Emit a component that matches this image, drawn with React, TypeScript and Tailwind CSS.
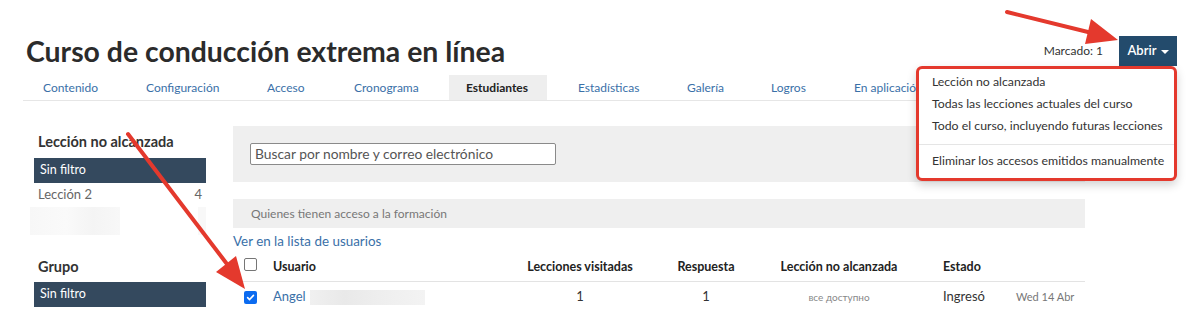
import React from "react";

const tabs: [string, string][] = [
  ["Contenido", "w-[89px]"],
  ["Configuración", "w-[107px]"],
  ["Acceso", "w-[73px]"],
  ["Cronograma", "w-[98px]"],
  ["Estudiantes", "w-[98px]"],
  ["Estadísticas", "w-[95px]"],
  ["Galería", "w-[70px]"],
  ["Logros", "w-[69px]"],
  ["En aplicación", "w-[100px]"],
];

function Arrows() {
  return (
    <svg
      className="pointer-events-none absolute left-0 top-0"
      width="1200"
      height="315"
      viewBox="0 0 1200 315"
    >
      <line x1="1007" y1="12" x2="1092" y2="33" stroke="#e4392d" strokeWidth="4" strokeLinecap="round" />
      <polygon points="1118,40 1085,44 1091,19" fill="#e4392d" />
      <line x1="128" y1="134" x2="230" y2="268" stroke="#e4392d" strokeWidth="4" strokeLinecap="round" />
      <polygon points="245,289 216,272 236,256" fill="#e4392d" />
    </svg>
  );
}

export default function App() {
  return (
    <div
      className="relative h-[315px] w-[1200px] overflow-hidden bg-white text-[#333]"
      style={{ fontFamily: "Lato, 'Liberation Sans', sans-serif" }}
    >
      {/* Header */}
      <div className="flex items-center justify-between pl-[26px] pr-[23px] pt-[36px]">
        <h1 className="whitespace-nowrap text-[28.4px] font-bold leading-[30px] text-[#2b2b2b]">
          Curso de conducción extrema en línea
        </h1>
        <div className="flex items-center gap-[16px]">
          <span className="whitespace-nowrap text-[12px] text-[#333]">Marcado: 1</span>
          <div className="relative">
            <button className="flex h-[30px] w-[58px] items-center justify-center gap-[4px] bg-[#234b6c] text-[13px] font-semibold text-white">
              Abrir
              <span className="mt-[1px] h-0 w-0 border-x-[4px] border-t-[4px] border-x-transparent border-t-white" />
            </button>
            <div className="absolute right-0 top-full z-10 w-[261px] whitespace-nowrap rounded-[6px] border-[3px] border-[#e4392d] bg-white pb-[6px] pt-[2px] text-[12.3px] text-[#333] shadow-[0_4px_10px_rgba(0,0,0,0.18)]">
              <div className="flex h-[22px] items-center px-[13px]">Lección no alcanzada</div>
              <div className="flex h-[22px] items-center px-[13px]">Todas las lecciones actuales del curso</div>
              <div className="flex h-[22px] items-center px-[13px]">Todo el curso, incluyendo futuras lecciones</div>
              <div className="mb-[5px] mt-[7px] h-px bg-[#e5e5e5]" />
              <div className="flex h-[22px] items-center px-[13px]">Eliminar los accesos emitidos manualmente</div>
            </div>
          </div>
        </div>
      </div>

      {/* Tabs */}
      <div className="mx-[23px] mt-[9px] flex gap-[14px] border-b border-[#e6e6e6] pl-[3px]">
        {tabs.map(([t, w]) => (
          <div
            key={t}
            className={
              t === "Estudiantes"
                ? `flex h-[25px] ${w} items-center whitespace-nowrap bg-[#eeeeee] pl-[17px] text-[12px] font-bold text-[#222]`
                : `flex h-[25px] ${w} items-center whitespace-nowrap pl-[17px] text-[12px] text-[#3a70a8]`
            }
          >
            {t}
          </div>
        ))}
      </div>

      {/* Body */}
      <div className="mt-[25px] flex gap-[27px] pl-[34px]">
        {/* Sidebar */}
        <div className="w-[172px] pt-[6px]">
          <div className="mb-[6px] pl-[4px] text-[14.5px] font-bold leading-[20px] text-[#333]">
            Lección no alcanzada
          </div>
          <div className="flex h-[25px] items-center bg-[#34495e] pl-[6px] text-[12.5px] text-white">
            Sin filtro
          </div>
          <div className="flex h-[24px] items-center justify-between pl-[4px] pr-[4px] text-[13px] text-[#666]">
            <span>Lección 2</span>
            <span>4</span>
          </div>
          <div className="flex h-[28px] items-stretch justify-between">
            <div className="ml-[-4px] w-[90px] bg-[linear-gradient(90deg,#f7f7f7,#fafafa_40%,#f4f4f4_70%,#f8f8f8)]" />
            <div className="w-[8px] bg-[#f8f8f8]" />
          </div>
          <div className="mb-[5px] mt-[22px] pl-[4px] text-[14.5px] font-bold leading-[20px] text-[#333]">
            Grupo
          </div>
          <div className="flex h-[25px] items-center bg-[#34495e] pl-[6px] text-[12.5px] text-white">
            Sin filtro
          </div>
        </div>

        {/* Main */}
        <div className="w-[852px]">
          <div className="flex h-[56px] items-center bg-[#efefef] px-[17px]">
            <div className="flex h-[22px] w-[306px] items-center whitespace-nowrap rounded-[2px] border border-[#8a8a8a] bg-white px-[4px] text-[13.8px] text-[#555]">
              Buscar por nombre y correo electrónico
            </div>
          </div>
          <div className="mt-[17px] flex h-[29px] items-center bg-[#efefef] pl-[18px] text-[12px] text-[#777]">
            Quienes tienen acceso a la formación
          </div>
          <div className="flex h-[26px] items-center text-[13.4px] text-[#3a70a8]">Ver en la lista de usuarios</div>

          {/* Table */}
          <div className="grid h-[28px] grid-cols-[40px_234px_146px_106px_160px_87px_79px] items-center border-b border-[#e3e3e3] text-[12.5px] font-bold text-[#222]">
            <div className="flex items-center pb-[6px] pl-[11px]">
              <span className="block h-[13px] w-[13px] rounded-[2px] border border-[#767676] bg-white" />
            </div>
            <div>Usuario</div>
            <div className="text-center">Lecciones visitadas</div>
            <div className="text-center">Respuesta</div>
            <div className="text-center">Lección no alcanzada</div>
            <div className="pl-[24px]">Estado</div>
            <div />
          </div>
          <div className="grid h-[30px] grid-cols-[40px_234px_146px_106px_160px_87px_79px] items-center text-[13px] text-[#333]">
            <div className="flex items-center pl-[11px]">
              <span className="flex h-[13px] w-[13px] items-center justify-center rounded-[2px] bg-[#0b6bf0]">
                <svg width="9" height="9" viewBox="0 0 10 10">
                  <path d="M1.8 5.2 L4 7.3 L8.3 2.6" fill="none" stroke="white" strokeWidth="1.8" strokeLinecap="round" strokeLinejoin="round" />
                </svg>
              </span>
            </div>
            <div className="flex items-center gap-[4px]">
              <span className="text-[#3a70a8]">Angel</span>
              <span className="h-[15px] w-[115px] bg-[linear-gradient(90deg,#f0f0f0,#e9e9e9_30%,#eeeeee_60%,#f3f3f3)]" />
            </div>
            <div className="text-center">1</div>
            <div className="text-center">1</div>
            <div className="text-center text-[10px] text-[#888]">все доступно</div>
            <div className="pl-[24px]">Ingresó</div>
            <div className="pl-[10px] text-[11px] text-[#777]">Wed 14 Abr</div>
          </div>
        </div>
      </div>

      <Arrows />
    </div>
  );
}
